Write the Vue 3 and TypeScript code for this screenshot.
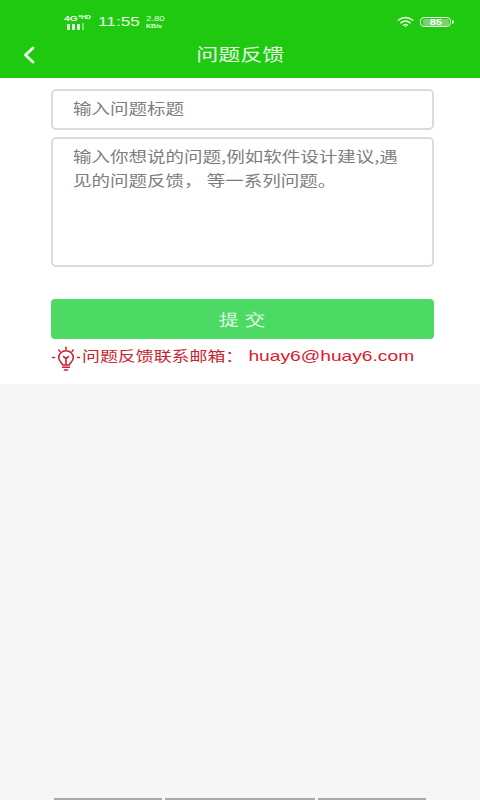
<script setup lang="ts">
const barWidths: number[] = [108, 150, 108]
</script>

<template>
  <div class="page">
    <header class="top">
      <div class="status">
        <div class="net">
          <span class="net-type">4G⁺ᴴᴰ</span>
          <span class="signal"><i></i><i></i><i></i><i class="dim"></i></span>
        </div>
        <span class="time">11:55</span>
        <span class="speed"><b>2.80</b><b class="unit">KB/s</b></span>
        <span class="grow"></span>
        <svg class="wifi" viewBox="0 0 18 13" width="17" height="12" fill="none" stroke="#e9f9e6" stroke-linecap="round">
          <path d="M1.2 4.6C5.6.6 12.4.6 16.8 4.6" stroke-width="1.7" />
          <path d="M4 7.4c2.9-2.5 7.1-2.5 10 0" stroke-width="1.7" />
          <path d="M6.8 10c1.3-1 3.1-1 4.4 0" stroke-width="1.6" />
          <circle cx="9" cy="11.6" r=".7" fill="#e9f9e6" stroke="none" />
        </svg>
        <span class="battery"><span class="level"><span class="level-num">85</span></span></span>
      </div>
      <div class="nav">
        <svg class="back" viewBox="0 0 14 18" width="14" height="18" fill="none" stroke="#eafae8" stroke-width="2.8" stroke-linecap="round" stroke-linejoin="round">
          <path d="M11 2 3.4 9l7.6 7" />
        </svg>
        <h1 class="title">问题反馈</h1>
      </div>
    </header>

    <main class="form">
      <div class="field single"><span class="wide">输入问题标题</span></div>
      <div class="field multi"><div class="wide wrap">输入你想说的问题,例如软件设计建议,遇见的问题反馈， 等一系列问题。</div></div>
      <button class="submit" type="button"><span class="submit-text">提 交</span></button>
      <p class="hint">
        <svg class="bulb" viewBox="0 0 30 28" width="30" height="26" preserveAspectRatio="none" fill="none" stroke="#c8242f" stroke-width="1.6" stroke-linecap="round" stroke-linejoin="round">
          <path d="M15 1.4v2M7.8 4.4l1.2 1.4M22.200 4.400l-1.200 1.400M1.500 12.400h2M26.500 12.400h2" />
          <path d="M11.600 20.400c0-2-3.900-3.400-3.900-8a7.300 7.300 0 0 1 14.600 0c0 4.600-3.900 6-3.900 8Z" />
          <path d="M12.600 11.400l2.400 2.200 2.400-2.200M15 13.600v6.600M11.600 23h6.800M13.400 25.800h3.200" />
        </svg>
        <span class="hint-text">
          <span class="hint-label">问题反馈联系邮箱：</span><span class="hint-mail">huay6@huay6.com</span>
        </span>
      </p>
    </main>

    <div class="rest">
      <div class="bars">
        <span v-for="(w, i) in barWidths" :key="i" class="bar" :style="{ width: w + 'px' }"></span>
      </div>
    </div>
  </div>
</template>

<style scoped>
.page {
  width: 480px;
  height: 800px;
  display: flex;
  flex-direction: column;
  background: #f6f6f6;
  font-family: "Noto Sans CJK SC", "Liberation Sans", sans-serif;
  overflow: hidden;
}
.top {
  height: 78px;
  flex: none;
  background: #1fc90f;
  color: #eefbec;
}
.status {
  height: 36px;
  padding: 8px 29px 0 64px;
  box-sizing: border-box;
  display: flex;
  align-items: center;
}
.net {
  width: 27px;
  display: flex;
  flex-direction: column;
}
.net-type {
  font: 700 8px/9px "Liberation Sans", sans-serif;
  white-space: nowrap;
  transform: scaleX(1.28);
  transform-origin: left center;
}
.signal {
  display: flex;
  gap: 2px;
  padding-left: 3px;
  align-items: flex-end;
  height: 7px;
}
.signal i {
  width: 3px;
  height: 6px;
  background: #dff6dc;
}
.signal i.dim {
  width: 2px;
  height: 7px;
  opacity: 0.5;
}
.time {
  flex: none;
  width: 48px;
  margin-left: 7px;
  font: 400 13.5px/18px "Liberation Sans", sans-serif;
  transform: scaleX(1.28);
  transform-origin: left center;
}
.speed {
  flex: none;
  margin-left: 0;
  display: flex;
  flex-direction: column;
  font: 400 7.5px/8px "Liberation Sans", sans-serif;
  transform: scaleX(1.28);
  transform-origin: left center;
}
.speed b {
  font-weight: 400;
}
.speed .unit {
  font-size: 5.5px;
  line-height: 7px;
  font-weight: 700;
}
.grow {
  flex: 1;
}
.wifi {
  margin-right: 6px;
}
.battery {
  position: relative;
  width: 31px;
  height: 10px;
  box-sizing: border-box;
  border: 1.3px solid #e4f7e1;
  border-radius: 4px;
  display: flex;
  align-items: center;
  justify-content: center;
}
.battery::after {
  content: "";
  position: absolute;
  right: -4px;
  top: 2px;
  width: 2px;
  height: 4px;
  background: #e4f7e1;
  border-radius: 0 2px 2px 0;
}
.level {
  width: 26px;
  height: 7px;
  background: #7fcf75;
  border-radius: 2px;
  display: flex;
  justify-content: center;
}
.level-num {
  color: #f5fdf4;
  font: 700 8.5px/7px "Liberation Sans", sans-serif;
  transform: scaleX(1.28);
}
.nav {
  position: relative;
  height: 38px;
  display: flex;
  align-items: center;
  justify-content: center;
}
.back {
  position: absolute;
  left: 22px;
  top: 10px;
}
.title {
  margin: 0;
  height: 38px;
  font-size: 17.2px;
  font-weight: 400;
  line-height: 36px;
  color: #e8f9e5;
  transform: scaleX(1.28);
}
.form {
  flex: none;
  height: 306px;
  background: #fff;
  padding: 11px 46px 0 51px;
  box-sizing: border-box;
  display: flex;
  flex-direction: column;
}
.field {
  width: 383px;
  box-sizing: border-box;
  border: 2px solid #dbdbdb;
  border-radius: 5px;
  background: #fff;
  padding: 0 20px;
  font-size: 14.5px;
  line-height: 24px;
  color: #7d7d7d;
}
.wide {
  display: inline-block;
  transform: scaleX(1.276);
  transform-origin: left center;
}
.wrap {
  display: block;
  width: 262px;
}
.single {
  height: 41px;
  display: flex;
  align-items: center;
  padding-bottom: 3px;
}
.multi {
  margin-top: 7px;
  height: 130px;
  padding-top: 5px;
}
.submit {
  margin-top: 32px;
  width: 383px;
  height: 40px;
  border: none;
  border-radius: 4px;
  background: #4cd964;
  padding: 2px 0 0;
  display: flex;
  align-items: center;
  justify-content: center;
}
.submit-text {
  color: #e9f9ec;
  font-family: inherit;
  font-size: 16px;
  line-height: 36px;
  transform: scaleX(1.28);
}
.hint {
  margin: 3px 0 0;
  display: flex;
  align-items: center;
  height: 28px;
  white-space: nowrap;
}
.bulb {
  flex: none;
  margin-top: 6px;
}
.hint-text {
  margin-left: 1px;
  padding-bottom: 5px;
  display: block;
  transform: scaleX(1.28);
  transform-origin: left center;
}
.hint-label {
  color: #c8242f;
  font-size: 14px;
}
.hint-mail {
  margin-left: 4px;
  font-family: "Liberation Sans", sans-serif;
  font-size: 15px;
  color: #d91c2c;
}
.rest {
  flex: 1;
  display: flex;
  flex-direction: column;
  justify-content: flex-end;
}
.bars {
  display: flex;
  gap: 3px;
  padding-left: 54px;
}
.bar {
  height: 2px;
  background: #a9a9a9;
}
</style>
